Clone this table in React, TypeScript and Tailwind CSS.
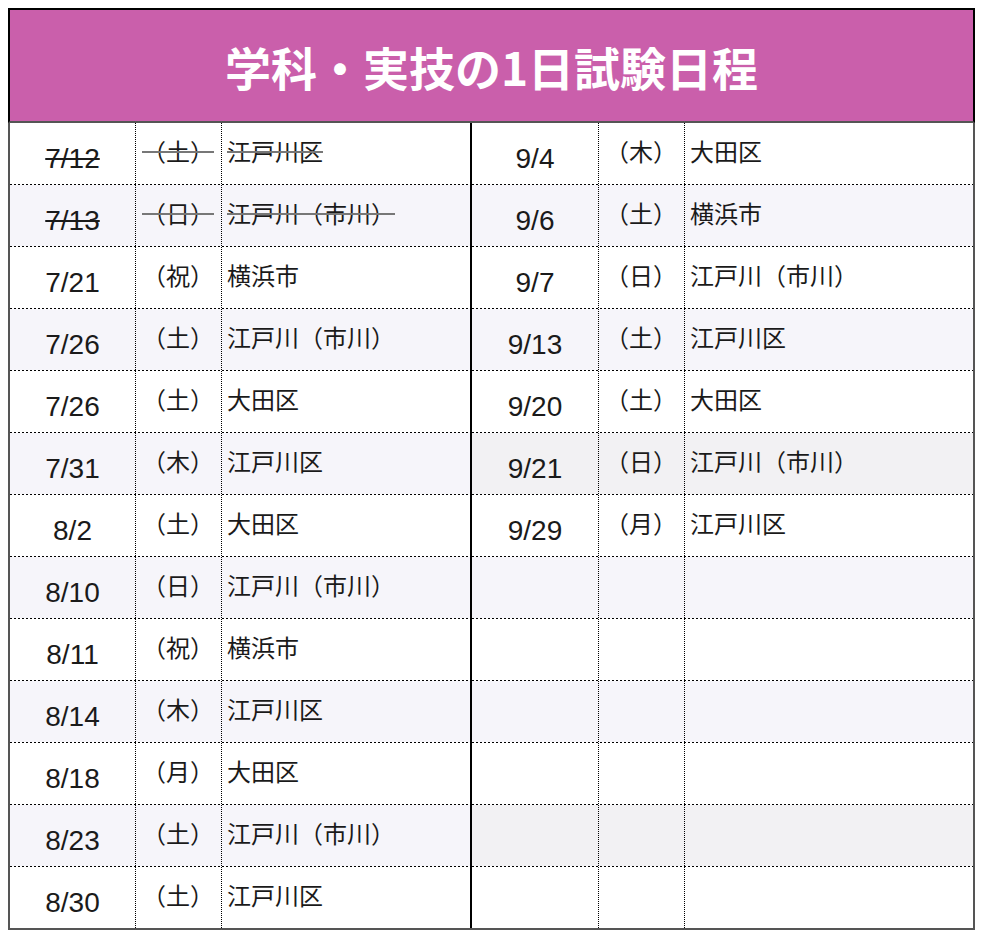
import React from "react";

type Row = { d: string; w: string; p: string; s?: boolean };

const left: Row[] = [
  { d: "7/12", w: "（土）", p: "江戸川区", s: true },
  { d: "7/13", w: "（日）", p: "江戸川（市川）", s: true },
  { d: "7/21", w: "（祝）", p: "横浜市" },
  { d: "7/26", w: "（土）", p: "江戸川（市川）" },
  { d: "7/26", w: "（土）", p: "大田区" },
  { d: "7/31", w: "（木）", p: "江戸川区" },
  { d: "8/2", w: "（土）", p: "大田区" },
  { d: "8/10", w: "（日）", p: "江戸川（市川）" },
  { d: "8/11", w: "（祝）", p: "横浜市" },
  { d: "8/14", w: "（木）", p: "江戸川区" },
  { d: "8/18", w: "（月）", p: "大田区" },
  { d: "8/23", w: "（土）", p: "江戸川（市川）" },
  { d: "8/30", w: "（土）", p: "江戸川区" },
];

const right: Row[] = [
  { d: "9/4", w: "（木）", p: "大田区" },
  { d: "9/6", w: "（土）", p: "横浜市" },
  { d: "9/7", w: "（日）", p: "江戸川（市川）" },
  { d: "9/13", w: "（土）", p: "江戸川区" },
  { d: "9/20", w: "（土）", p: "大田区" },
  { d: "9/21", w: "（日）", p: "江戸川（市川）" },
  { d: "9/29", w: "（月）", p: "江戸川区" },
  { d: "", w: "", p: "" },
  { d: "", w: "", p: "" },
  { d: "", w: "", p: "" },
  { d: "", w: "", p: "" },
  { d: "", w: "", p: "" },
  { d: "", w: "", p: "" },
];

const dateFont = { fontFamily: '"Liberation Sans", Arial, sans-serif' };
const cjkFont = { fontFamily: '"Noto Sans CJK JP", "Noto Sans", sans-serif' };

function Table({ rows, side }: { rows: Row[]; side: "l" | "r" }) {
  return (
    <div className="flex flex-col">
      {rows.map((r, i) => {
        const last = i === rows.length - 1;
        let bg = "bg-white";
        if (i % 2 === 1) {
          bg = side === "r" && (i === 5 || i === 11) ? "bg-[#f2f1f3]" : "bg-[#f6f5fa]";
        }
        return (
          <React.Fragment key={i}>
            <div
              className={
                (side === "l" ? "grid grid-cols-[126px_86px_1fr] " : "grid grid-cols-[127px_86px_1fr] ") +
                bg +
                " h-[61px]"
              }
            >
              <div className="border-r border-dotted border-black text-center pt-[22px]">
                <span
                  style={dateFont}
                  className={
                    "text-[28px] leading-[28px] text-[#1a1a1a]" +
                    (r.s ? " line-through decoration-[#1a1a1a]" : "")
                  }
                >
                  {r.d}
                </span>
              </div>
              <div className="border-r border-dotted border-black pl-[6px] pt-[16px]">
                <span
                  style={cjkFont}
                  className={
                    "text-[24px] leading-[24px] text-[#1a1a1a] whitespace-nowrap" +
                    (r.s ? " line-through decoration-[#777] decoration-2" : "")
                  }
                >
                  {r.w}
                </span>
              </div>
              <div className="pl-[5px] pt-[16px]">
                <span
                  style={cjkFont}
                  className={
                    "text-[24px] leading-[24px] text-[#1a1a1a] whitespace-nowrap" +
                    (r.s ? " line-through decoration-[#777] decoration-2" : "")
                  }
                >
                  {r.p}
                </span>
              </div>
            </div>
            {!last && (
              <div className="h-px bg-[repeating-linear-gradient(90deg,#000_0px,#000_2px,transparent_2px,transparent_4px)]" />
            )}
          </React.Fragment>
        );
      })}
    </div>
  );
}

export default function App() {
  return (
    <div className="bg-white min-h-[940px] pt-2 pl-2">
      <div className="w-[967px]">
        <div className="h-[115px] border-2 border-black border-b-[#555] bg-[#ca5fab] flex items-center justify-center">
          <span style={cjkFont} className="text-white text-[46px] font-bold leading-none">
            学科・実技の1日試験日程
          </span>
        </div>
        <div className="flex border-x-2 border-b-2 border-[#555]">
          <div className="w-[460px]">
            <Table rows={left} side="l" />
          </div>
          <div className="w-[2px] bg-black" />
          <div className="flex-1">
            <Table rows={right} side="r" />
          </div>
        </div>
      </div>
    </div>
  );
}
